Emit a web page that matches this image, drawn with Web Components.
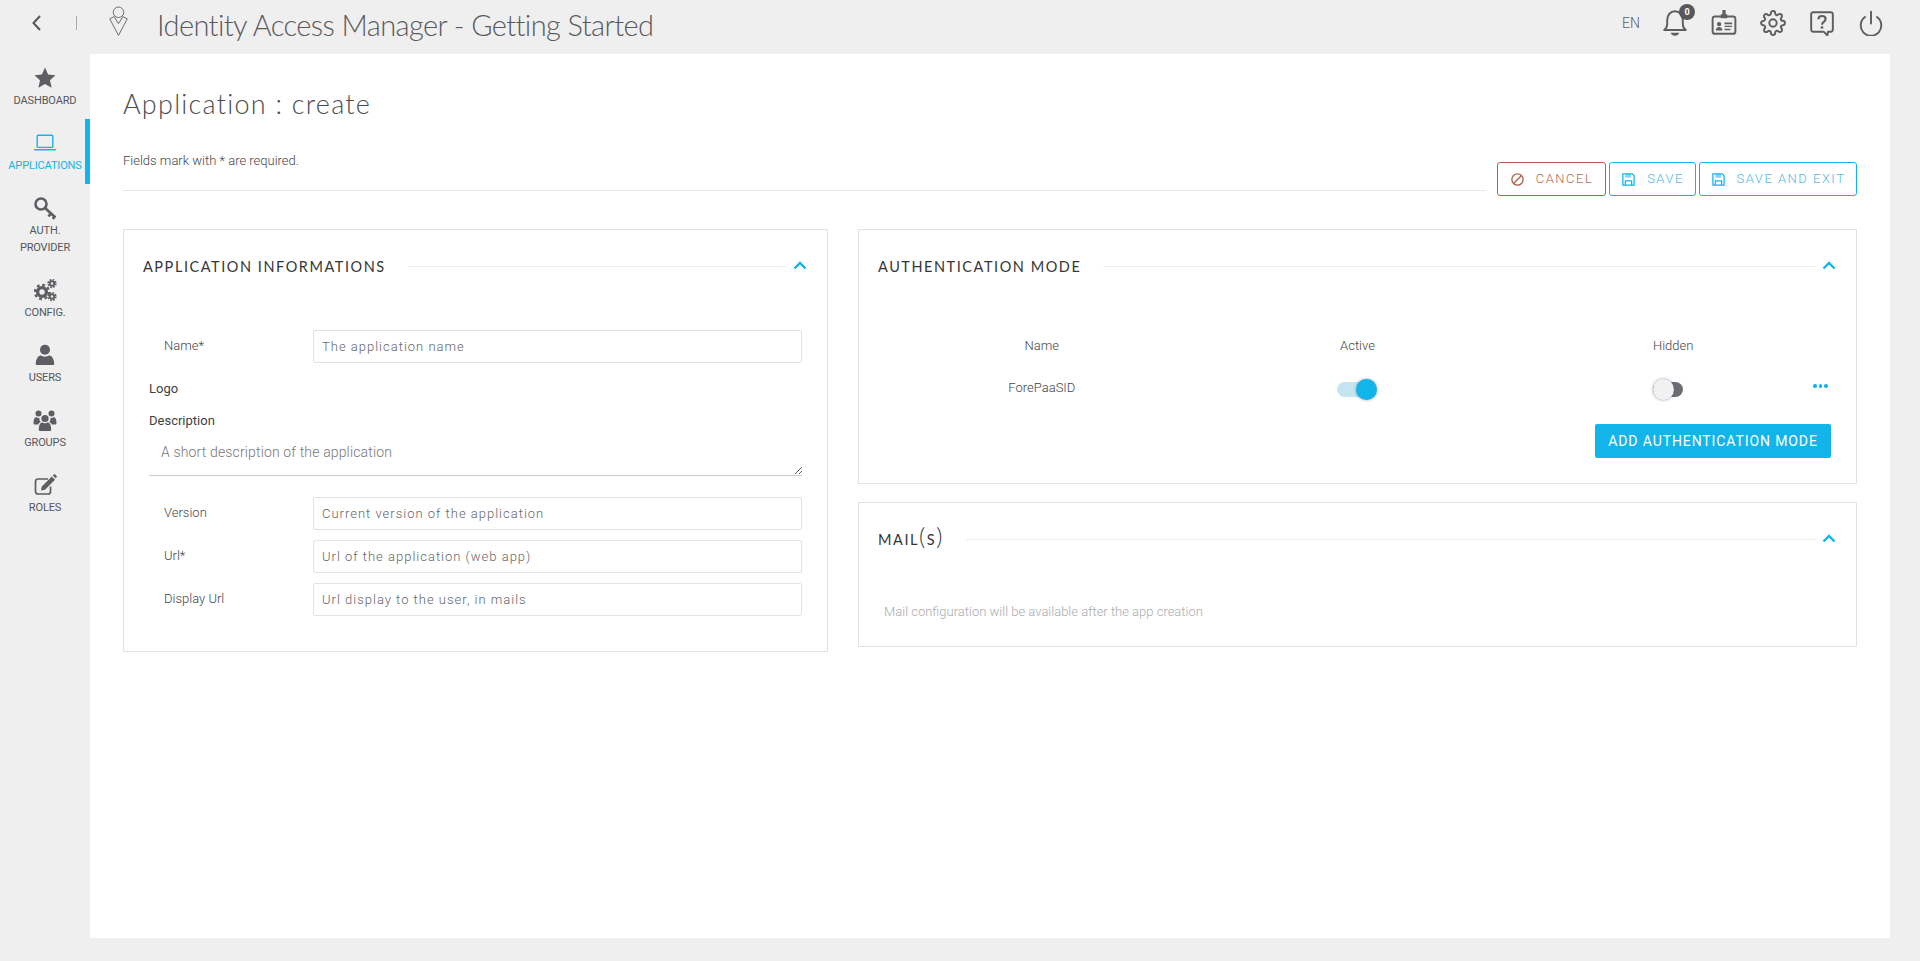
<!DOCTYPE html>
<html lang="en"><head><meta charset="utf-8"><title>Identity Access Manager</title>
<style>
html,body{margin:0;height:961px;overflow:hidden;background:#efefef;font-family:Roboto,"Liberation Sans",sans-serif}
</style></head>
<body>
<iam-app></iam-app>
<script>
const ICONS={
 star:'<path fill="currentColor" d="M12 1.6l3.1 6.9 7.4.8-5.5 5 1.6 7.4L12 18l-6.6 3.7L7 14.3l-5.5-5 7.4-.8z"/>',
 laptop:'<g fill="none" stroke="currentColor" stroke-width="1.4"><rect x="4.2" y="4.2" width="15.6" height="12.2" rx="1"/></g><path fill="currentColor" d="M1 18h22v.6c0 .6-.6 1-1.2 1H2.2c-.6 0-1.2-.4-1.2-1z"/>',
 key:'<g fill="none" stroke="currentColor" stroke-width="2.6"><circle cx="8" cy="8" r="5.500"/><path d="M12 12L22.500 21.500M18 17.500l-2.600 2.800M21.500 20.800l-1.800 2"/></g>',
 cogs:'<g fill="none" stroke="currentColor"><circle cx="9" cy="14" r="4.4" stroke-width="3.4"/><circle cx="9" cy="14" r="7" stroke-width="2.4" stroke-dasharray="2.8 2.7"/><circle cx="19" cy="5.5" r="2.2" stroke-width="1.9"/><circle cx="19" cy="5.5" r="3.9" stroke-width="1.5" stroke-dasharray="1.8 1.26"/><circle cx="19" cy="18.5" r="2.2" stroke-width="1.9"/><circle cx="19" cy="18.5" r="3.9" stroke-width="1.5" stroke-dasharray="1.8 1.26"/></g>',
 user:'<circle cx="12" cy="6.8" r="5" fill="currentColor"/><path fill="currentColor" d="M3.5 22c-.4 0-.7-.3-.7-.7 0-5 2-8.300 5-9 1.200 1 2.500 1.400 4.200 1.400s3-.4 4.200-1.400c3 .7 5 4 5 9 0 .4-.3.700-.7.700z"/>',
 group:'<g fill="currentColor"><circle cx="5.500" cy="5.500" r="3"/><circle cx="18.500" cy="5.500" r="3"/><path d="M.5 15c0-3.500 1-5.500 2.500-6 .8.700 1.700 1 2.500 1 .3 0 .7 0 1-.1-.3 1.500.2 3 1.200 4.100-1.200.5-2 1.300-2.500 2.500H1.500c-.6 0-1-.6-1-1.500zM23.500 15c0-3.500-1-5.500-2.500-6-.8.700-1.700 1-2.500 1-.3 0-.7 0-1-.1.300 1.500-.2 3-1.200 4.100 1.200.5 2 1.300 2.500 2.500h3.700c.6 0 1-.6 1-1.500z"/><circle cx="12" cy="10.500" r="3.600"/><path d="M5.800 21.500c0-3.800 1-6.500 3.200-7.300.9.700 1.900 1 3 1s2.100-.3 3-1c2.200.8 3.200 3.500 3.200 7.300 0 .9-.5 1.500-1.300 1.500H7.100c-.8 0-1.300-.6-1.300-1.500z"/></g>',
 edit:'<path fill="none" stroke="currentColor" stroke-width="1.700" d="M17.500 13.500v5c0 1.500-1 2.500-2.500 2.500H5c-1.500 0-2.500-1-2.500-2.500V8.500C2.500 7 3.500 6 5 6h10"/><path fill="currentColor" d="M8 17.500l.8-4L18.800 3.500l3.200 3.200-10 10zM19.800 2.500l1-1c.4-.4 1-.4 1.400 0l1.400 1.400c.4.400.4 1 0 1.400l-1 1z"/>',
 bell:'<path fill="none" stroke="currentColor" stroke-width="1.800" stroke-linejoin="round" d="M2 18.500c1.900-1.300 2.800-2.800 2.800-5.500V9.500C4.800 4.500 7.800 1.200 12 1.200s7.200 3.300 7.200 8.300V13c0 2.700.9 4.200 2.800 5.500z"/><path fill="currentColor" d="M8 21h8c-.5 1.800-2.100 2.800-4 2.800S8.500 22.800 8 21z"/>',
 card:'<rect x="1.500" y="6" width="21" height="16" rx="2.200" fill="none" stroke="currentColor" stroke-width="1.800"/><path fill="currentColor" d="M10.500 0h3v4h1.500v3.500H9V4h1.500z"/><circle cx="7.500" cy="13" r="2" fill="currentColor"/><path fill="currentColor" d="M4.500 19c0-2 1.200-3.200 3-3.200s3 1.200 3 3.200zM12.500 11.500h7v1.600h-7zM12.500 14.500h7v1.300h-7zM12.500 17.300h5.500v1.300h-5.500z"/>',
 gear:'<g fill="none" stroke="currentColor" stroke-width="1.800"><circle cx="12" cy="12" r="3.400"/><path d="M19.400 15a1.650 1.650 0 0 0 .33 1.820l.06.06a2 2 0 0 1 0 2.830 2 2 0 0 1-2.830 0l-.06-.06a1.650 1.650 0 0 0-1.820-.33 1.650 1.650 0 0 0-1 1.510V21a2 2 0 0 1-2 2 2 2 0 0 1-2-2v-.09A1.650 1.650 0 0 0 9 19.400a1.650 1.650 0 0 0-1.820.33l-.06.06a2 2 0 0 1-2.830 0 2 2 0 0 1 0-2.830l.06-.06a1.650 1.650 0 0 0 .33-1.820 1.650 1.650 0 0 0-1.510-1H3a2 2 0 0 1-2-2 2 2 0 0 1 2-2h.09A1.650 1.650 0 0 0 4.600 9a1.650 1.650 0 0 0-.33-1.820l-.06-.06a2 2 0 0 1 0-2.830 2 2 0 0 1 2.830 0l.06.06a1.650 1.650 0 0 0 1.820.33H9a1.650 1.650 0 0 0 1-1.510V3a2 2 0 0 1 2-2 2 2 0 0 1 2 2v.09a1.650 1.650 0 0 0 1 1.510 1.650 1.650 0 0 0 1.820-.33l.06-.06a2 2 0 0 1 2.830 0 2 2 0 0 1 0 2.830l-.06.06a1.650 1.650 0 0 0-.33 1.820V9a1.650 1.650 0 0 0 1.510 1H21a2 2 0 0 1 2 2 2 2 0 0 1-2 2h-.09a1.650 1.650 0 0 0-1.510 1z"/></g>',
 help:'<path fill="none" stroke="currentColor" stroke-width="1.800" stroke-linejoin="round" d="M4 2h16c1.300 0 2 .7 2 2v14c0 1.300-.7 2-2 2h-2.500l-.5 3.500-3.500-3.500H4c-1.300 0-2-.7-2-2V4c0-1.300.7-2 2-2z"/><path fill="none" stroke="currentColor" stroke-width="2" d="M8.700 8.500c0-2 1.400-3 3.300-3s3.300 1.100 3.300 2.800c0 2.700-3.300 2.500-3.300 5.200"/><rect x="10.900" y="15" width="2.200" height="2.200" fill="currentColor"/>',
 power:'<g fill="none" stroke="currentColor" stroke-width="1.800" stroke-linecap="round"><path d="M12 1.500v11"/><path d="M6.500 6.500a9.500 9.500 0 1 0 11 0"/></g>',
 back:'<path fill="none" stroke="currentColor" stroke-width="2" d="M15 5l-6.500 7 6.500 7"/>',
 logo:'<g fill="none" stroke="currentColor" stroke-width="1.100"><circle cx="12" cy="7" r="6"/><path d="M2 14.500L12 33.500l10-19-5-2.500-5 8-5-8z"/></g>',
 ban:'<g fill="none" stroke="currentColor" stroke-width="2.200"><circle cx="12" cy="12" r="9"/><path d="M5.700 18.300L18.300 5.700"/></g>',
 save:'<path fill="none" stroke="currentColor" stroke-width="2" d="M3 3h15l3 3v15H3z"/><path fill="currentColor" opacity=".55" d="M7 3h9v6H7z"/><path fill="none" stroke="currentColor" stroke-width="2" d="M7 21v-7h10v7"/>',
 chevron:'<path fill="none" stroke="currentColor" stroke-width="2.400" d="M1.500 8.500L7 3l5.500 5.500"/>'
};
function svg(n,w,h,vb){return `<svg xmlns="http://www.w3.org/2000/svg" width="${w}" height="${h}" viewBox="${vb||'0 0 24 24'}" aria-hidden="true">${ICONS[n]}</svg>`}
function el(tag,css,html){customElements.define(tag,class extends HTMLElement{
  constructor(){super();const s=this.attachShadow({mode:'open'});s.innerHTML=`<style>${css}</style>`+(typeof html==='function'?html(this):html)}
})}
const DISPLAY='Lato,"Open Sans",sans-serif';

el('icon-button',`:host{display:flex;width:49px;height:46px;align-items:center;justify-content:center;color:#5f5f63;position:relative}
 .b{position:absolute;left:29px;top:4px;width:16px;height:16px;border-radius:50%;background:#58585c;color:#fff;font:700 9px/16px Roboto,sans-serif;text-align:center}`,
 h=>svg(h.getAttribute('icon'),26,26)+(h.hasAttribute('badge')?`<span class="b">${h.getAttribute('badge')}</span>`:''));

el('top-bar',`:host{display:flex;box-sizing:border-box;height:54px;align-items:center;color:#5f5f63;padding:0 25px 8px 0}
 .back{display:flex;margin-left:25px;color:#55565a}
 .sep{width:1px;height:14px;background:#aaa;margin:0 0 0 27px}
 .logo{display:flex;margin:-4px 0 0 31px;color:#66676b}
 h1{flex:1;margin:3px 0 0 28px;font:300 29px/46px ${DISPLAY};letter-spacing:-.6px;color:#5a5a5e;white-space:nowrap}
 .lang{font:300 14px/46px Roboto,sans-serif;color:#5d5d60;margin-right:10px}`,
 `<span class="back">${svg('back',24,24)}</span><span class="sep"></span><span class="logo">${svg('logo',21,30,'0 0 24 34')}</span>
 <h1>Identity Access Manager - Getting Started</h1><span class="lang">EN</span><slot></slot>`);

el('nav-item',`:host{display:block;box-sizing:border-box;padding:12px 0 10px;text-align:center;color:#5d5e63;font:400 11px/17px Roboto,sans-serif;letter-spacing:-.15px}
 :host([active]){color:#12b5ea;box-shadow:inset -5px 0 0 #12b5ea}
 .i{display:flex;height:24px;justify-content:center;margin-bottom:2px}
 :host(:not([active])) .t{color:#55565b}`,
 h=>`<div class="i">${svg(h.getAttribute('icon'),24,24)}</div><div class="t"><slot></slot></div>`);

el('side-nav',`:host{display:block;width:90px;flex:none}`,`<slot></slot>`);

el('action-button',`:host{display:flex;box-sizing:border-box;height:34px;align-items:center;justify-content:center;gap:11px;border:1px solid #12b5ea;border-radius:3px;color:#4fb9e6;font:300 13px/32px Roboto,sans-serif;letter-spacing:1.5px;white-space:nowrap;--ic:#12b5ea}
 :host([danger]){border-color:#ad6450;color:#b06c55;--ic:#ad6450}
 span{display:flex;color:var(--ic)}`,
 h=>`<span>${svg(h.getAttribute('icon'),15,15)}</span><slot></slot>`);

el('page-head',`:host{display:flex;align-items:flex-end}
 .l{flex:1;border-bottom:1px solid #e6e6e6;margin:0 11px 5px 0;padding:30px 0 19px}
 h2{margin:0 0 27px;font:300 27px/40px ${DISPLAY};letter-spacing:1.25px;color:#4c4c50}
 p{margin:0;font:300 13px/20px Roboto,sans-serif;color:#45454a}
 .r{display:flex;gap:3px}`,
 `<div class="l"><h2>Application : create</h2><p>Fields mark with * are required.</p></div><div class="r"><slot></slot></div>`);

el('panel-card',`:host{display:block;border:1px solid #e2e2e2;background:#fff}
 header{display:flex;align-items:center;height:24px;padding:24px 20px 0 19px;gap:22px}
 h3{margin:2px 0 0;font:400 14.500px/24px ${DISPLAY};letter-spacing:1.550px;color:#36363a;white-space:nowrap}
 i{flex:1;height:1px;background:#ececec}
 b{display:flex;color:#12b5ea;margin:-2px 0 0 -15px}
 .body{padding:0 25px}`,
 h=>`<header><h3><slot name="title"></slot></h3><i></i><b>${svg('chevron',14,11,'0 0 14 11')}</b></header><div class="body"><slot></slot></div>`);

el('field-box',`:host{display:flex;box-sizing:border-box;height:33px;flex:1;align-items:center;border:1px solid #e2e2e2;border-radius:2px;padding:0 8px;font:300 13px/31px Roboto,sans-serif;letter-spacing:1px;color:#66666a}`,`<slot></slot>`);

el('form-row',`:host{display:flex;align-items:center;height:33px}
 label{box-sizing:border-box;width:164px;padding-left:15px;margin-top:-2px;font:300 13px/20px Roboto,sans-serif;color:#45454a}`,
 h=>`<label>${h.getAttribute('label')}</label><field-box><slot></slot></field-box>`);

el('plain-label',`:host{display:block;font:400 13px/22px Roboto,sans-serif;color:#3f3f44}`,`<slot></slot>`);

el('area-box',`:host{display:block;box-sizing:border-box;height:44px;padding:10px 12px 0;border-bottom:1px solid #c8ccd2;position:relative;font:300 14px/20px Roboto,sans-serif;letter-spacing:.15px;color:#77777b}
 svg{position:absolute;right:0;bottom:1px}`,
 `<slot></slot><svg width="8" height="8" viewBox="0 0 8 8"><path d="M1 8L8 1M5 8l3-3" stroke="#666" stroke-width="1"/></svg>`);

el('toggle-switch',`:host{display:inline-block;position:relative;width:30px;height:20px;vertical-align:middle}
 .t{position:absolute;left:0;right:0;top:3px;height:15px;border-radius:8px;background:#6c6c73}
 .k{position:absolute;left:0;top:0;width:21px;height:21px;border-radius:50%;background:#f1f1f1;box-shadow:0 0 3px rgba(70,80,120,.6)}
 :host([on]){width:39px}
 :host([on]) .t{background:#c5e5f1}
 :host([on]) .k{left:auto;right:-1px;background:#12b5ea;box-shadow:0 0 3px rgba(60,60,110,.5)}`,
 `<span class="t"></span><span class="k"></span>`);

el('auth-table',`:host{display:block}
 .g{display:grid;grid-template-columns:repeat(3,1fr);text-align:center;font:300 13px/22px Roboto,sans-serif;color:#45454a}
 .h{margin-top:57px}
 .r{margin-top:15px;line-height:30px;height:30px}
 .n{padding-top:1px}
 .c{position:relative;padding-top:1px}
 .d{position:absolute;right:3px;top:12px;display:flex;gap:2px}
 .d u{width:3.500px;height:3.500px;border-radius:50%;background:#12b5ea}
 .a{display:flex;justify-content:flex-end;margin-top:22px}
 button{all:unset;box-sizing:border-box;width:236px;height:34px;border-radius:2px;background:#12b5ea;color:#fff;text-align:center;font:400 14px/34px Roboto,sans-serif;letter-spacing:.9px}`,
 `<div class="g h"><div>Name</div><div>Active</div><div>Hidden</div></div>
 <div class="g r"><div class="n">ForePaaSID</div><div class="c"><toggle-switch on style="margin-right:2px"></toggle-switch></div><div class="c"><toggle-switch style="margin-right:10px"></toggle-switch><span class="d"><u></u><u></u><u></u></span></div></div>
 <div class="a"><button>ADD AUTHENTICATION MODE</button></div>`);

el('app-form',`:host{display:block;padding-bottom:35px}
 form-row{display:flex}
 .s{margin-top:10px}`,
 `<form-row label="Name*" style="margin-top:52px">The application name</form-row>
 <plain-label style="margin-top:15px">Logo</plain-label>
 <plain-label style="margin-top:10px">Description</plain-label>
 <area-box>A short description of the application</area-box>
 <form-row label="Version" style="margin-top:21px">Current version of the application</form-row>
 <form-row class="s" label="Url*">Url of the application (web app)</form-row>
 <form-row class="s" label="Display Url">Url display to the user, in mails</form-row>`);

el('iam-app',`:host{display:flex;flex-direction:column;height:961px}
 .w{display:flex;flex:1}
 main{flex:1;background:#fff;margin:0 30px 23px 0;padding:0 33px}
 .grid{display:grid;grid-template-columns:705px 999px;gap:30px;margin-top:33px;align-items:start}
 .col{display:flex;flex-direction:column;gap:18px}
 .mail{margin:51px 0 24px;font:300 13px/20px Roboto,sans-serif;color:#a9abad}
 big{font-size:24px;line-height:16px;font-weight:300}`,
 `<top-bar>
   <icon-button icon="bell" badge="0"></icon-button><icon-button icon="card"></icon-button><icon-button icon="gear"></icon-button><icon-button icon="help"></icon-button><icon-button icon="power"></icon-button>
 </top-bar>
 <div class="w">
  <side-nav>
   <nav-item icon="star">DASHBOARD</nav-item>
   <nav-item icon="laptop" active>APPLICATIONS</nav-item>
   <nav-item icon="key">AUTH.<br>PROVIDER</nav-item>
   <nav-item icon="cogs">CONFIG.</nav-item>
   <nav-item icon="user">USERS</nav-item>
   <nav-item icon="group">GROUPS</nav-item>
   <nav-item icon="edit">ROLES</nav-item>
  </side-nav>
  <main>
   <page-head>
    <action-button danger icon="ban" style="width:109px">CANCEL</action-button>
    <action-button icon="save" style="width:87px">SAVE</action-button>
    <action-button icon="save" style="width:158px">SAVE AND EXIT</action-button>
   </page-head>
   <div class="grid">
    <panel-card><span slot="title">APPLICATION INFORMATIONS</span><app-form></app-form></panel-card>
    <div class="col">
     <panel-card><span slot="title">AUTHENTICATION MODE</span><div style="padding-bottom:25px"><auth-table></auth-table></div></panel-card>
     <panel-card><span slot="title">MAIL<big>(</big>S<big>)</big></span><div class="mail">Mail configuration will be available after the app creation</div></panel-card>
    </div>
   </div>
  </main>
 </div>`);
</script>
</body></html>
